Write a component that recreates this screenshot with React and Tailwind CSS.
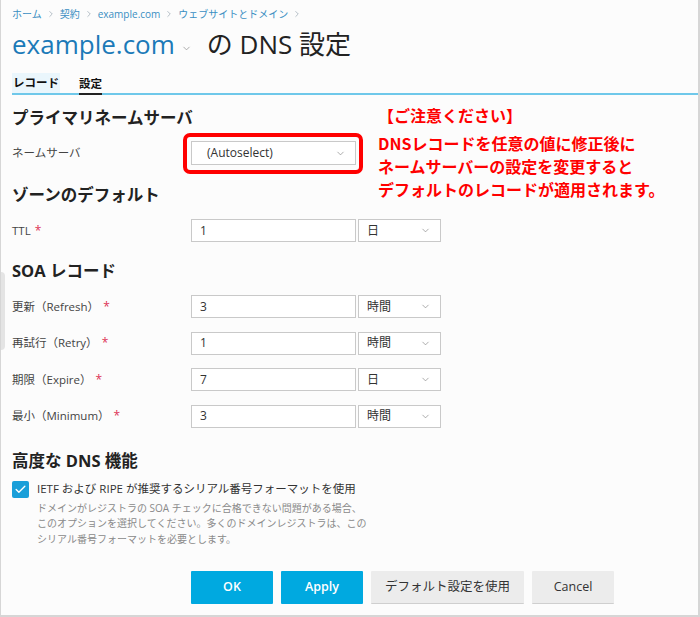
import React from "react";
import { ChevronDown, ChevronRight, Check } from "lucide-react";

const font = { fontFamily: '"Open Sans", "Noto Sans CJK JP", sans-serif' };

function Select({ value, width = "w-[164px]" }) {
  return (
    <div
      className={`${width} h-[24px] bg-white border border-[#c9c9c9] flex items-center justify-between pl-[9px] pr-[9px] text-[12px] text-[#333]`}
    >
      <span>{value}</span>
      <ChevronDown size={11} strokeWidth={1.5} className="text-[#888]" />
    </div>
  );
}

function Row({ label, required, value, unit }) {
  return (
    <div className="flex items-center h-[23px]">
      <div className="w-[179px] text-[11.5px] text-[#444] flex items-center">
        <span>{label}</span>
        {required && <span className="ml-[4px] text-[#dc3256] text-[12px]">*</span>}
      </div>
      <div className="w-[165px] h-[23px] bg-white border border-[#c9c9c9] flex items-center pl-[8px] text-[12px] text-[#333]">
        {value}
      </div>
      <div className="ml-[2px]">
        <div className="w-[83px] h-[23px] bg-white border border-[#c9c9c9] flex items-center justify-between pl-[8px] pr-[9px] text-[12px] text-[#333]">
          <span>{unit}</span>
          <ChevronDown size={11} strokeWidth={1.5} className="text-[#888]" />
        </div>
      </div>
    </div>
  );
}

function Heading({ children, className = "" }) {
  return (
    <h2 className={`text-[16.5px] leading-[24px] font-bold text-[#222] ${className}`}>{children}</h2>
  );
}

function Crumb({ children }) {
  return (
    <>
      <span>{children}</span>
      <ChevronRight size={10} strokeWidth={1.5} className="text-[#8a9aa6] mx-[4px]" />
    </>
  );
}

export default function App() {
  const soa = [
    { label: "更新（Refresh）", value: "3", unit: "時間" },
    { label: "再試行（Retry）", value: "1", unit: "時間" },
    { label: "期限（Expire）", value: "7", unit: "日" },
    { label: "最小（Minimum）", value: "3", unit: "時間" },
  ];

  return (
    <div
      style={font}
      className="relative w-[700px] h-[617px] bg-[#fcfcfc] border-l border-r-[2px] border-b-[2px] border-[#d6d6d6] overflow-hidden"
    >
      <div className="absolute left-0 top-[272px] w-[4px] h-[78px] bg-[#e4e4e4] rounded-r-sm" />

      <div className="pl-[11px]">
        {/* breadcrumb */}
        <div className="pt-[7px] text-[10px] leading-[14px] text-[#3a8ec2] flex items-center">
          <Crumb>ホーム</Crumb>
          <Crumb>契約</Crumb>
          <Crumb>example.com</Crumb>
          <Crumb>ウェブサイトとドメイン</Crumb>
        </div>

        {/* title */}
        <h1 className="mt-[7px] flex items-center text-[26px] leading-[32px] text-[#222]">
          <span className="text-[#1b7ab8]">example.com</span>
          <ChevronDown size={11} strokeWidth={1.75} className="text-[#999] ml-[6px] mt-[8px]" />
          <span className="ml-[15px]">の DNS 設定</span>
        </h1>

        {/* tabs */}
        <div className="mt-[13px] flex items-end border-b-[2px] border-[#6fc8ea] h-[22px]">
          <div className="h-full flex items-center px-[1px] bg-[#eaf6fc] text-[11.5px] font-bold text-[#111]">
            レコード
          </div>
          <div className="ml-[19px] h-full flex items-center border-b-[2px] border-[#222] -mb-[2px] text-[11.5px] font-bold text-[#111]">
            設定
          </div>
        </div>

        <Heading className="mt-[11px]">プライマリネームサーバ</Heading>
        <div className="mt-[11px] flex items-center h-[24px]">
          <div className="w-[179px] text-[11.5px] text-[#444]">ネームサーバ</div>
          <Select value={<span className="pl-[6px]">(Autoselect)</span>} width="w-[165px]" />
        </div>

        <Heading className="mt-[18px]">ゾーンのデフォルト</Heading>
        <div className="mt-[12px]">
          <Row label="TTL" required value="1" unit="日" />
        </div>

        <Heading className="mt-[17px]">SOA レコード</Heading>
        <div className="mt-[12px] flex flex-col gap-[13.5px]">
          {soa.map((r) => (
            <Row key={r.label} label={r.label} required value={r.value} unit={r.unit} />
          ))}
        </div>

        <Heading className="mt-[21px]">高度な DNS 機能</Heading>
        <div className="mt-[8px] flex items-center h-[17px]">
          <div className="w-[17px] h-[17px] bg-[#1a9fd9] rounded-[2px] flex items-center justify-center">
            <Check size={13} strokeWidth={2.5} className="text-white" />
          </div>
          <span className="ml-[8px] text-[11.5px] text-[#333]">
            IETF および RIPE が推奨するシリアル番号フォーマットを使用
          </span>
        </div>
        <p className="mt-[3px] ml-[25px] text-[10px] leading-[15.5px] text-[#8a8a8a]">
          ドメインがレジストラの SOA チェックに合格できない問題がある場合、
          <br />
          このオプションを選択してください。多くのドメインレジストラは、この
          <br />
          シリアル番号フォーマットを必要とします。
        </p>

        <div className="mt-[24px] ml-[179px] flex gap-[8px] text-[12.5px]">
          <button className="w-[82px] h-[33px] bg-[#00a9e0] text-white font-semibold rounded-[1px]">OK</button>
          <button className="w-[82px] h-[33px] bg-[#00a9e0] text-white font-semibold rounded-[1px]">Apply</button>
          <button className="w-[153px] h-[33px] bg-[#ececec] text-[#333] border-b border-[#cfcfcf] rounded-[1px]">
            デフォルト設定を使用
          </button>
          <button className="w-[82px] h-[33px] bg-[#ececec] text-[#333] border-b border-[#cfcfcf] rounded-[1px]">
            Cancel
          </button>
        </div>
      </div>

      {/* annotation */}
      <div className="absolute left-[182px] top-[133px] w-[180px] h-[41px] border-[4px] border-[#ff0000] rounded-[7px]" />
      <div
        className="absolute left-[377px] top-[104px] text-[16px] font-bold text-[#ff0000] leading-[23px]"
        style={{ fontFamily: '"Noto Sans CJK JP", sans-serif' }}
      >
        <div>【ご注意ください】</div>
        <div className="mt-[5px]">DNSレコードを任意の値に修正後に</div>
        <div>ネームサーバーの設定を変更すると</div>
        <div>デフォルトのレコードが適用されます。</div>
      </div>
    </div>
  );
}
